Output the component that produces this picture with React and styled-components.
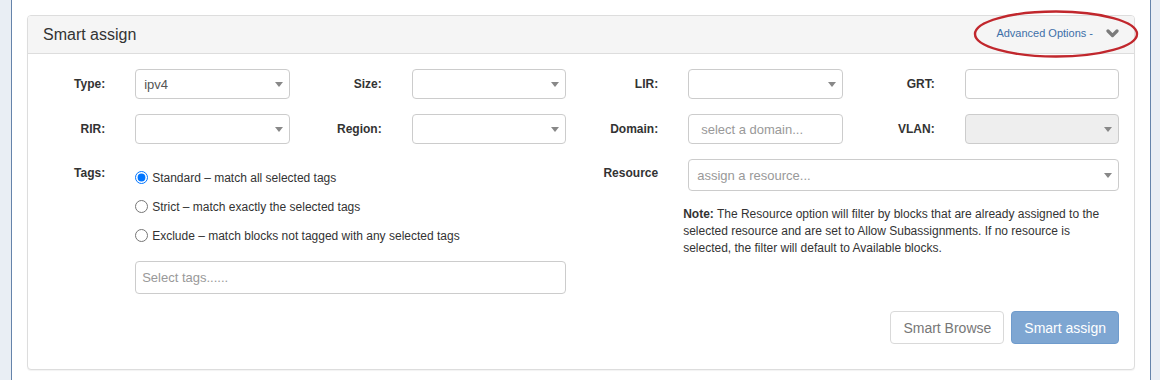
import styled, { createGlobalStyle } from "styled-components";

const GlobalStyle = createGlobalStyle`
  html, body {
    margin: 0;
    padding: 0;
    background: #fff;
  }
  body {
    font-family: "Liberation Sans", Arial, Helvetica, sans-serif;
    font-size: 12px;
    color: #333;
  }
  * {
    box-sizing: border-box;
  }
`;

const topFields = [
  [
    { label: "Type:", kind: "select", value: "ipv4" },
    { label: "Size:", kind: "select" },
    { label: "LIR:", kind: "select" },
    { label: "GRT:", kind: "text" },
  ],
  [
    { label: "RIR:", kind: "select" },
    { label: "Region:", kind: "select" },
    { label: "Domain:", kind: "text", placeholder: "select a domain..." },
    { label: "VLAN:", kind: "select", disabled: true },
  ],
];

const tagModes = [
  "Standard \u2013 match all selected tags",
  "Strict \u2013 match exactly the selected tags",
  "Exclude \u2013 match blocks not tagged with any selected tags",
];

const App = () => {
  return (
    <>
      <GlobalStyle />
      <Page>
        <SideStrip />
        <Main>
          <Panel>
            <PanelHeader>
              <PanelTitle>Smart assign</PanelTitle>
              <AdvancedToggle>
                <AdvancedLink>Advanced Options -</AdvancedLink>
                <svg width="13" height="9" viewBox="0 0 13 9">
                  <polyline
                    points="2,2 6.5,6.5 11,2"
                    fill="none"
                    stroke="#7b7b7b"
                    strokeWidth="3.2"
                    strokeLinecap="round"
                    strokeLinejoin="round"
                  />
                </svg>
              </AdvancedToggle>
              <Highlight width="166" height="48" viewBox="0 0 166 48">
                <ellipse
                  cx="83"
                  cy="24"
                  rx="81"
                  ry="22.5"
                  fill="none"
                  stroke="#c1272d"
                  strokeWidth="2.4"
                />
              </Highlight>
            </PanelHeader>
            <PanelBody>
              <FormGrid>
                {topFields.flat().map((f) => (
                  <Field key={f.label}>
                    <Label>{f.label}</Label>
                    <Control>
                      {f.kind === "select" ? (
                        <SelectBox disabled={f.disabled}>
                          <SelectValue>{f.value || ""}</SelectValue>
                          <Caret />
                        </SelectBox>
                      ) : (
                        <TextBox>
                          {f.placeholder && (
                            <Placeholder>{f.placeholder}</Placeholder>
                          )}
                        </TextBox>
                      )}
                    </Control>
                  </Field>
                ))}

                <BlockLabel>Tags:</BlockLabel>
                <WideControl>
                  <RadioList>
                    {tagModes.map((m, i) => (
                      <RadioRow key={m}>
                        <Radio
                          type="radio"
                          name="tagmode"
                          defaultChecked={i === 0}
                        />
                        {m}
                      </RadioRow>
                    ))}
                  </RadioList>
                  <TagsBox>
                    <Placeholder>Select tags......</Placeholder>
                  </TagsBox>
                </WideControl>

                <BlockLabel>Resource</BlockLabel>
                <WideControl>
                  <SelectBox tall>
                    <Placeholder>assign a resource...</Placeholder>
                    <Caret />
                  </SelectBox>
                  <Note>
                    <NoteLead>Note:</NoteLead> The Resource option will filter
                    by blocks that are already assigned to the selected
                    resource and are set to Allow Subassignments. If no
                    resource is selected, the filter will default to Available
                    blocks.
                  </Note>
                </WideControl>
              </FormGrid>
              <Actions>
                <Button>Smart Browse</Button>
                <Button primary>Smart assign</Button>
              </Actions>
            </PanelBody>
          </Panel>
        </Main>
        <SideStrip right />
      </Page>
    </>
  );
};

export default App;

const Page = styled.div`
  display: flex;
  height: 380px;
  overflow: hidden;
`;

const SideStrip = styled.div`
  width: ${(p) => (p.right ? "10px" : "12px")};
  flex-shrink: 0;
  background: #e9eef4;
  ${(p) =>
    p.right
      ? "border-left: 1px solid #6584ab;"
      : "border-right: 1px solid #6584ab;"}
`;

const Main = styled.div`
  flex: 1;
  padding: 15px 15px 0;
`;

const Panel = styled.div`
  border: 1px solid #ddd;
  border-radius: 4px;
  background: #fff;
  box-shadow: 0 1px 1px rgba(0, 0, 0, 0.05);
`;

const PanelHeader = styled.div`
  position: relative;
  display: flex;
  align-items: center;
  justify-content: space-between;
  height: 38px;
  padding: 0 15px;
  background: #f5f5f5;
  border-bottom: 1px solid #ddd;
  border-radius: 3px 3px 0 0;
`;

const PanelTitle = styled.h3`
  margin: 0;
  font-size: 16px;
  font-weight: normal;
  color: #333;
`;

const AdvancedToggle = styled.div`
  display: flex;
  align-items: center;
  gap: 13px;
  margin-top: -3px;
`;

const AdvancedLink = styled.span`
  font-size: 11px;
  color: #3d6fa8;
`;

const Highlight = styled.svg`
  position: absolute;
  right: -5px;
  top: -6px;
  overflow: visible;
  pointer-events: none;
`;

const PanelBody = styled.div`
  padding: 15px 0 25px;
`;

const FormGrid = styled.div`
  display: grid;
  grid-template-columns: repeat(4, 1fr 2fr);
  row-gap: 15px;
`;

const Field = styled.div`
  display: contents;
`;

const Label = styled.label`
  display: flex;
  align-items: center;
  justify-content: flex-end;
  padding: 0 15px;
  font-weight: bold;
  font-size: 12px;
  color: #333;
`;

const BlockLabel = styled(Label)`
  align-items: flex-start;
  padding-top: 7px;
`;

const Control = styled.div`
  padding: 0 15px;
`;

const WideControl = styled.div`
  grid-column: span 3;
  padding: 0 15px;
`;

const SelectBox = styled.div`
  position: relative;
  display: flex;
  align-items: center;
  height: ${(p) => (p.tall ? "32px" : "30px")};
  padding: 0 24px 0 8px;
  border: 1px solid #ccc;
  border-radius: 4px;
  background: ${(p) => (p.disabled ? "#eee" : "#fff")};
  font-size: 13px;
  color: #555;
`;

const SelectValue = styled.span``;

const Caret = styled.span`
  position: absolute;
  right: 6px;
  top: 50%;
  margin-top: -2px;
  width: 0;
  height: 0;
  border-left: 4px solid transparent;
  border-right: 4px solid transparent;
  border-top: 5px solid #888;
`;

const TextBox = styled.div`
  display: flex;
  align-items: center;
  height: 30px;
  padding: 0 12px;
  border: 1px solid #ccc;
  border-radius: 4px;
  background: #fff;
`;

const TagsBox = styled(TextBox)`
  height: 33px;
  margin-top: 11px;
  padding: 0 6px;
`;

const Placeholder = styled.span`
  font-size: 13px;
  color: #999;
`;

const RadioList = styled.div`
  padding-top: 4px;
`;

const RadioRow = styled.label`
  display: flex;
  align-items: center;
  height: 29px;
  font-size: 12px;
  color: #333;
`;

const Radio = styled.input`
  width: 13px;
  height: 13px;
  margin: 0 4px 0 0;
`;

const Note = styled.p`
  margin: 15px 0 0 -5px;
  font-size: 12px;
  line-height: 17px;
  color: #333;
`;

const NoteLead = styled.strong`
  font-weight: bold;
`;

const Actions = styled.div`
  display: flex;
  justify-content: flex-end;
  gap: 7px;
  margin-top: 17px;
  padding: 0 15px;
`;

const Button = styled.button`
  height: 33px;
  padding: 0 12px;
  font-family: inherit;
  font-size: 14px;
  border-radius: 4px;
  border: 1px solid ${(p) => (p.primary ? "#6f9bcc" : "#d9d9d9")};
  background: ${(p) => (p.primary ? "#7ea6d2" : "#fff")};
  color: ${(p) => (p.primary ? "#fff" : "#777")};
  cursor: not-allowed;
`;
